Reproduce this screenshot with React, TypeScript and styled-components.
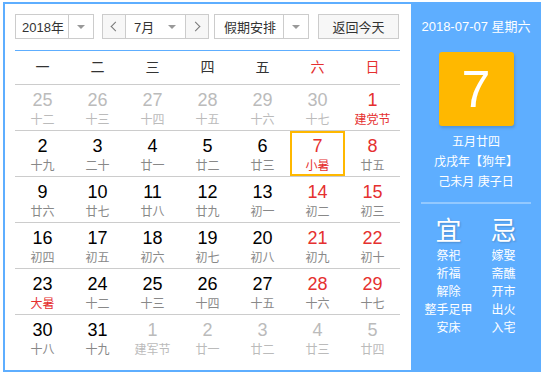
import styled, { createGlobalStyle } from 'styled-components'

type Day = {
  n: number
  lunar: string
  other?: boolean
  red?: boolean
  lunarRed?: boolean
  today?: boolean
}

const weekdays = ['一', '二', '三', '四', '五', '六', '日']

const rows: Day[][] = [
  [
    { n: 25, lunar: '十二', other: true },
    { n: 26, lunar: '十三', other: true },
    { n: 27, lunar: '十四', other: true },
    { n: 28, lunar: '十五', other: true },
    { n: 29, lunar: '十六', other: true },
    { n: 30, lunar: '十七', other: true },
    { n: 1, lunar: '建党节', red: true, lunarRed: true },
  ],
  [
    { n: 2, lunar: '十九' },
    { n: 3, lunar: '二十' },
    { n: 4, lunar: '廿一' },
    { n: 5, lunar: '廿二' },
    { n: 6, lunar: '廿三' },
    { n: 7, lunar: '小暑', red: true, lunarRed: true, today: true },
    { n: 8, lunar: '廿五', red: true },
  ],
  [
    { n: 9, lunar: '廿六' },
    { n: 10, lunar: '廿七' },
    { n: 11, lunar: '廿八' },
    { n: 12, lunar: '廿九' },
    { n: 13, lunar: '初一' },
    { n: 14, lunar: '初二', red: true },
    { n: 15, lunar: '初三', red: true },
  ],
  [
    { n: 16, lunar: '初四' },
    { n: 17, lunar: '初五' },
    { n: 18, lunar: '初六' },
    { n: 19, lunar: '初七' },
    { n: 20, lunar: '初八' },
    { n: 21, lunar: '初九', red: true },
    { n: 22, lunar: '初十', red: true },
  ],
  [
    { n: 23, lunar: '大暑', lunarRed: true },
    { n: 24, lunar: '十二' },
    { n: 25, lunar: '十三' },
    { n: 26, lunar: '十四' },
    { n: 27, lunar: '十五' },
    { n: 28, lunar: '十六', red: true },
    { n: 29, lunar: '十七', red: true },
  ],
  [
    { n: 30, lunar: '十八' },
    { n: 31, lunar: '十九' },
    { n: 1, lunar: '建军节', other: true },
    { n: 2, lunar: '廿一', other: true },
    { n: 3, lunar: '廿二', other: true },
    { n: 4, lunar: '廿三', other: true },
    { n: 5, lunar: '廿四', other: true },
  ],
]

const good = ['祭祀', '祈福', '解除', '整手足甲', '安床']
const bad = ['嫁娶', '斋醮', '开市', '出火', '入宅']

function App() {
  return (
    <>
      <GlobalStyle />
      <Frame>
        <Main>
          <Toolbar>
            <Select $w={79}>
              <SelectText>2018年</SelectText>
              <ArrowBox $divider>
                <Caret />
              </ArrowBox>
            </Select>
            <MonthGroup>
              <StepButton>
                <Chevron $dir="left" />
              </StepButton>
              <MonthBox>
                <span>7月</span>
                <Caret />
              </MonthBox>
              <StepButton>
                <Chevron $dir="right" />
              </StepButton>
            </MonthGroup>
            <Select $w={95}>
              <SelectText>假期安排</SelectText>
              <ArrowBox $divider>
                <Caret />
              </ArrowBox>
            </Select>
            <TodayButton>返回今天</TodayButton>
          </Toolbar>

          <Grid>
            {weekdays.map((w, i) => (
              <HeadCell key={w} $red={i > 4}>
                {w}
              </HeadCell>
            ))}
            {rows.flat().map((d, i) => (
              <Cell key={i} $today={d.today} $last={i >= 35}>
                <DayNum $other={d.other} $red={d.red}>
                  {d.n}
                </DayNum>
                <Lunar $other={d.other} $red={d.lunarRed}>
                  {d.lunar}
                </Lunar>
              </Cell>
            ))}
          </Grid>
        </Main>

        <Side>
          <DateLine>2018-07-07 星期六</DateLine>
          <BigDay>7</BigDay>
          <LunarInfo>
            <div>五月廿四</div>
            <div>戊戌年【狗年】</div>
            <div>己未月 庚子日</div>
          </LunarInfo>
          <Rule />
          <Advice>
            <AdviceCol>
              <AdviceHead>宜</AdviceHead>
              {good.map((g) => (
                <AdviceItem key={g}>{g}</AdviceItem>
              ))}
            </AdviceCol>
            <AdviceCol>
              <AdviceHead>忌</AdviceHead>
              {bad.map((b) => (
                <AdviceItem key={b}>{b}</AdviceItem>
              ))}
            </AdviceCol>
          </Advice>
        </Side>
      </Frame>
    </>
  )
}

const blue = '#5eaeff'
const red = '#e5302f'

const GlobalStyle = createGlobalStyle`
  body {
    margin: 0;
    background: #fff;
    font-family: "Liberation Sans", Arial, "Noto Sans CJK SC", sans-serif;
  }
`

const Frame = styled.div`
  display: flex;
  box-sizing: border-box;
  width: 538px;
  height: 370px;
  margin: 2px 0 0 3px;
  border: 2px solid ${blue};
  border-right: none;
  background: #fff;
`

const Main = styled.div`
  flex-shrink: 0;
  width: 396px;
  padding: 10px 0 0 10px;
`

const Toolbar = styled.div`
  display: flex;
  align-items: center;
  height: 25px;
  margin-bottom: 11px;
  font-size: 13px;
  color: #333;
`

const Select = styled.div<{ $w: number }>`
  display: flex;
  box-sizing: border-box;
  width: ${(p) => p.$w}px;
  height: 25px;
  border: 1px solid #ccc;
  background: #fff;
  margin-right: 8px;
  &:nth-child(3) {
    margin-left: -3px;
    margin-right: 9px;
  }
`

const SelectText = styled.div`
  flex: 1;
  display: flex;
  align-items: center;
  justify-content: center;
  padding-left: 2px;
`

const ArrowBox = styled.div<{ $divider?: boolean }>`
  width: 24px;
  display: flex;
  align-items: center;
  justify-content: center;
  border-left: ${(p) => (p.$divider ? '1px solid #ccc' : 'none')};
`

const Caret = styled.span`
  display: inline-block;
  width: 0;
  height: 0;
  border-left: 4px solid transparent;
  border-right: 4px solid transparent;
  border-top: 4px solid #999;
`

const MonthGroup = styled.div`
  display: flex;
  box-sizing: border-box;
  width: 107px;
  height: 25px;
  border: 1px solid #ccc;
  margin-right: 8px;
`

const StepButton = styled.div`
  width: 22px;
  display: flex;
  align-items: center;
  justify-content: center;
  background: #f7f7f7;
  &:first-child {
    border-right: 1px solid #ccc;
  }
  &:last-child {
    border-left: 1px solid #ccc;
  }
`

const Chevron = styled.span<{ $dir: 'left' | 'right' }>`
  display: inline-block;
  width: 6px;
  height: 6px;
  border-left: 1px solid #777;
  border-bottom: 1px solid #777;
  transform: rotate(${(p) => (p.$dir === 'left' ? '45deg' : '225deg')});
  margin-left: ${(p) => (p.$dir === 'left' ? '3px' : '-3px')};
`

const MonthBox = styled.div`
  flex: 1;
  display: flex;
  align-items: center;
  justify-content: space-between;
  padding: 0 9px 0 8px;
  background: #fff;
`

const TodayButton = styled.div`
  box-sizing: border-box;
  width: 81px;
  height: 25px;
  display: flex;
  align-items: center;
  justify-content: center;
  border: 1px solid #ccc;
  background: #f7f7f7;
`

const Grid = styled.div`
  display: grid;
  grid-template-columns: repeat(7, 55px);
  width: 385px;
  border-top: 1px solid ${blue};
`

const HeadCell = styled.div<{ $red?: boolean }>`
  height: 33px;
  line-height: 33px;
  text-align: center;
  font-size: 14px;
  color: ${(p) => (p.$red ? red : '#333')};
  border-bottom: 1px solid #ccc;
`

const Cell = styled.div<{ $today?: boolean; $last?: boolean }>`
  box-sizing: border-box;
  height: ${(p) => (p.$last ? '45px' : '46px')};
  padding-top: 5px;
  text-align: center;
  border-bottom: ${(p) => (p.$last ? 'none' : '1px solid #ccc')};
  box-shadow: ${(p) => (p.$today ? 'inset 0 0 0 2px #ffb800' : 'none')};
`

const DayNum = styled.div<{ $other?: boolean; $red?: boolean }>`
  font-size: 18px;
  line-height: 20px;
  color: ${(p) => (p.$other ? '#bbb' : p.$red ? red : '#000')};
`

const Lunar = styled.div<{ $other?: boolean; $red?: boolean }>`
  margin-top: 2px;
  font-size: 12px;
  line-height: 16px;
  color: ${(p) => (p.$red ? red : p.$other ? '#bbb' : '#888')};
`

const Side = styled.div`
  flex-shrink: 0;
  width: 130px;
  margin-top: -2px;
  margin-bottom: -2px;
  padding-top: 2px;
  background: ${blue};
  color: #fff;
  display: flex;
  flex-direction: column;
  align-items: center;
`

const DateLine = styled.div`
  margin-top: 13px;
  font-size: 13px;
  line-height: 20px;
`

const BigDay = styled.div`
  margin-top: 15px;
  width: 75px;
  height: 74px;
  border-radius: 3px;
  background: #ffb800;
  box-shadow: 1px 2px 3px rgba(0, 0, 0, 0.15);
  font-size: 52px;
  line-height: 74px;
  text-align: center;
`

const LunarInfo = styled.div`
  margin-top: 6px;
  font-size: 12px;
  line-height: 20px;
  text-align: center;
`

const Rule = styled.div`
  width: 110px;
  height: 2px;
  margin-top: 10px;
  background: #93c9ff;
`

const Advice = styled.div`
  display: grid;
  grid-template-columns: 55px 55px;
  margin-top: 12px;
`

const AdviceCol = styled.div`
  text-align: center;
`

const AdviceHead = styled.div`
  font-size: 26px;
  line-height: 30px;
  margin-bottom: 1px;
  text-shadow: 1px 1px 2px rgba(0, 0, 0, 0.2);
`

const AdviceItem = styled.div`
  font-size: 12px;
  line-height: 18px;
  white-space: nowrap;
`

export default App
